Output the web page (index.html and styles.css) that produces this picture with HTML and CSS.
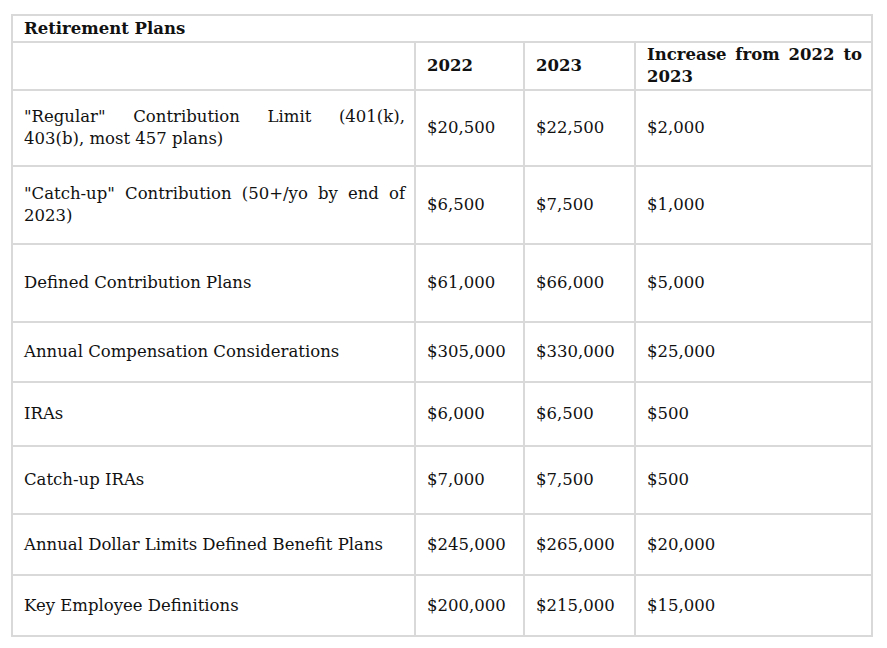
FILE: index.html
```html
<!DOCTYPE html>
<html lang="en">
<head>
<meta charset="utf-8">
<title>Retirement Plans</title>
<link rel="stylesheet" href="styles.css">
</head>
<body>
<table class="plans">
  <colgroup>
    <col class="c-label">
    <col class="c-y22">
    <col class="c-y23">
    <col class="c-inc">
  </colgroup>
  <tr class="r-title"><th colspan="4" class="title">Retirement Plans</th></tr>
  <tr class="r-head">
    <th></th>
    <th>2022</th>
    <th>2023</th>
    <th class="just">Increase from 2022 to 2023</th>
  </tr>
  <tr class="r-76">
    <td class="just"><span class="first-line">"Regular" Contribution Limit (401(k),</span> 403(b), most 457 plans)</td>
    <td>$20,500</td><td>$22,500</td><td>$2,000</td>
  </tr>
  <tr class="r-78">
    <td class="just">"Catch-up" Contribution (50+/yo by end of 2023)</td>
    <td>$6,500</td><td>$7,500</td><td>$1,000</td>
  </tr>
  <tr class="r-78">
    <td>Defined Contribution Plans</td>
    <td>$61,000</td><td>$66,000</td><td>$5,000</td>
  </tr>
  <tr class="r-60">
    <td>Annual Compensation Considerations</td>
    <td>$305,000</td><td>$330,000</td><td>$25,000</td>
  </tr>
  <tr class="r-64">
    <td>IRAs</td>
    <td>$6,000</td><td>$6,500</td><td>$500</td>
  </tr>
  <tr class="r-68">
    <td>Catch-up IRAs</td>
    <td>$7,000</td><td>$7,500</td><td>$500</td>
  </tr>
  <tr class="r-61">
    <td>Annual Dollar Limits Defined Benefit Plans</td>
    <td>$245,000</td><td>$265,000</td><td>$20,000</td>
  </tr>
  <tr class="r-61">
    <td>Key Employee Definitions</td>
    <td>$200,000</td><td>$215,000</td><td>$15,000</td>
  </tr>
</table>
</body>
</html>
```

FILE: styles.css
```css
html, body {
  margin: 0;
  padding: 0;
  background: #ffffff;
}

body {
  padding: 14px 0 0 11px;
  font-family: "DejaVu Serif", "Liberation Serif", serif;
  font-size: 16.5px;
  color: #111111;
}

.plans {
  border-collapse: collapse;
  table-layout: fixed;
  width: 862px;
  border: 2px solid #d9d9d9;
}

.c-label { width: 403px; }
.c-y22 { width: 109px; }
.c-y23 { width: 111px; }
.c-inc { width: 237px; }

.plans th,
.plans td {
  border: 2px solid #d9d9d9;
  padding: 0 9px 0 11px;
  text-align: left;
  vertical-align: middle;
  line-height: 22px;
  font-weight: normal;
}

.plans th {
  font-weight: bold;
}

.plans .just {
  text-align: justify;
}

.first-line {
  display: block;
  text-align: justify;
  text-align-last: justify;
}

.r-title { height: 27px; }
.r-head { height: 48px; }
.r-76 { height: 76px; }
.r-78 { height: 78px; }
.r-60 { height: 60px; }
.r-64 { height: 64px; }
.r-68 { height: 68px; }
.r-61 { height: 61px; }
```
